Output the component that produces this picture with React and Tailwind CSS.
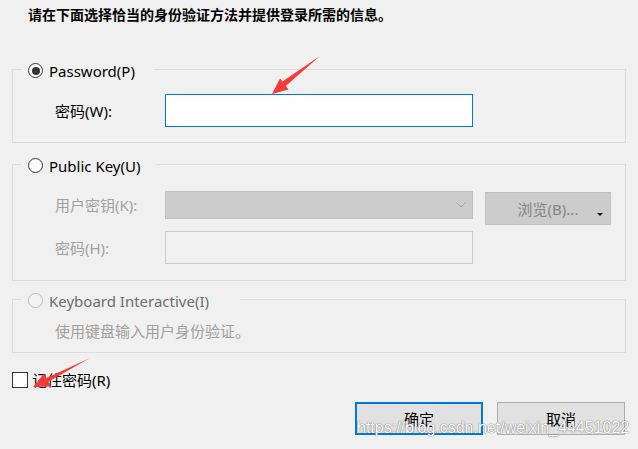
import React from "react";

const font = "font-['Noto_Sans','Noto_Sans_CJK_SC',sans-serif]";

function Radio({ checked, disabled }) {
  return (
    <span
      className={
        "flex h-[15px] w-[15px] shrink-0 items-center justify-center rounded-full border " +
        (disabled ? "border-[#bcbcbc] bg-[#f4f4f4]" : "border-[#333333] bg-white")
      }
    >
      {checked ? <span className="h-[8px] w-[8px] rounded-full bg-[#333333]" /> : null}
    </span>
  );
}

function Legend({ width, checked, disabled, children }) {
  return (
    <legend className="h-[21px] p-0" style={{ width }}>
      <div className="flex h-[21px] items-center gap-[6px] pl-[6px] pt-[2px]">
        <Radio checked={checked} disabled={disabled} />
        <span
          className={
            "text-[15px] leading-[20px] " + (disabled ? "text-[#6d6d6d]" : "text-black")
          }
        >
          {children}
        </span>
      </div>
    </legend>
  );
}

export default function App() {
  return (
    <div
      className={
        "relative h-[449px] w-[638px] overflow-hidden bg-[#f0f0f0] text-black " + font
      }
    >
      {/* Title */}
      <div className="pl-[28px] pt-[5px] text-[14px] font-bold leading-[20px]">
        请在下面选择恰当的身份验证方法并提供登录所需的信息。
      </div>

      {/* Password group */}
      <fieldset className="mx-[12px] mt-[34px] border border-[#dcdcdc] pb-[15px] pl-[9px]">
        <Legend width="132px" checked>
          Password(P)
        </Legend>
        <div className="mt-[14px] flex h-[33px] items-center pl-[33px]">
          <span className="w-[110px] text-[15px] leading-[20px]">密码(W):</span>
          <div className="h-[33px] w-[308px] border border-[#0078d7] bg-white" />
        </div>
      </fieldset>

      {/* Public key group */}
      <fieldset className="mx-[12px] mt-[11px] border border-[#dcdcdc] pb-[16px] pl-[9px]">
        <Legend width="134px">Public Key(U)</Legend>
        <div className="mt-[16px] flex items-start pl-[33px]">
          <span className="flex h-[28px] w-[110px] items-center text-[15px] leading-[20px] text-[#a0a0a0]">
            用户密钥(K):
          </span>
          <div className="flex h-[28px] w-[308px] items-center justify-end border border-[#bfbfbf] bg-[#cccccc] pr-[6px]">
            <svg width="10" height="6" viewBox="0 0 10 6">
              <polyline points="0.5,0.5 5,5 9.5,0.5" fill="none" stroke="#a8a8a8" strokeWidth="1" />
            </svg>
          </div>
          <div className="relative ml-[12px] mt-[1px] flex h-[33px] w-[126px] items-center justify-center border border-[#bfbfbf] bg-[#cccccc]">
            <span className="text-[15px] leading-[20px] text-[#858585]">浏览(B)...</span>
            <svg
              className="absolute bottom-[8px] right-[7px]"
              width="6"
              height="3"
              viewBox="0 0 6 3"
            >
              <polygon points="0,0 6,0 3,3" fill="#1a1a1a" />
            </svg>
          </div>
        </div>
        <div className="mt-[6px] flex h-[33px] items-center pl-[33px]">
          <span className="w-[110px] text-[15px] leading-[20px] text-[#a0a0a0]">密码(H):</span>
          <div className="h-[33px] w-[308px] border border-[#cccccc] bg-[#f0f0f0]" />
        </div>
      </fieldset>

      {/* Keyboard interactive group */}
      <fieldset className="mx-[12px] mt-[8px] border border-[#dcdcdc] pb-[11px] pl-[9px]">
        <Legend width="218px" disabled>
          Keyboard Interactive(I)
        </Legend>
        <div className="mt-[11px] pl-[33px] text-[15px] leading-[20px] text-[#a0a0a0]">
          使用键盘输入用户身份验证。
        </div>
      </fieldset>

      {/* Remember password */}
      <div className="mt-[17px] flex h-[20px] items-center gap-[4px] pl-[12px]">
        <span className="h-[16px] w-[16px] border border-[#333333] bg-white" />
        <span className="text-[15px] leading-[20px]">记住密码(R)</span>
      </div>

      {/* Buttons */}
      <div className="mt-[12px] flex justify-end gap-[14px] pr-[13px]">
        <button className="flex h-[33px] w-[128px] items-center justify-center border-2 border-[#0078d7] bg-[#e1e1e1] text-[15px] leading-[20px]">
          确定
        </button>
        <button className="flex h-[33px] w-[128px] items-center justify-center border border-[#adadad] bg-[#e1e1e1] text-[15px] leading-[20px]">
          取消
        </button>
      </div>

      {/* Red annotation arrows */}
      <svg
        className="pointer-events-none absolute left-0 top-0"
        width="638"
        height="449"
        viewBox="0 0 638 449"
      >
        <polygon
          points="320,56 285.8,86 288.5,89.5 272,94 280,78.5 282.4,81.6"
          fill="#f43a3a"
        />
        <polygon
          points="90,358 48.3,381.8 51,386.5 33,387 44,373.5 46.5,378"
          fill="#f43a3a"
        />
      </svg>

      {/* Watermark */}
      <div className="absolute left-[357px] top-[420px] font-['Liberation_Sans',Arial,sans-serif] text-[16px] leading-[16px] text-white [text-shadow:0_0_1px_#707070,0_0_1px_#707070]">
        https://blog.csdn.net/weixin_44451022
      </div>
    </div>
  );
}
